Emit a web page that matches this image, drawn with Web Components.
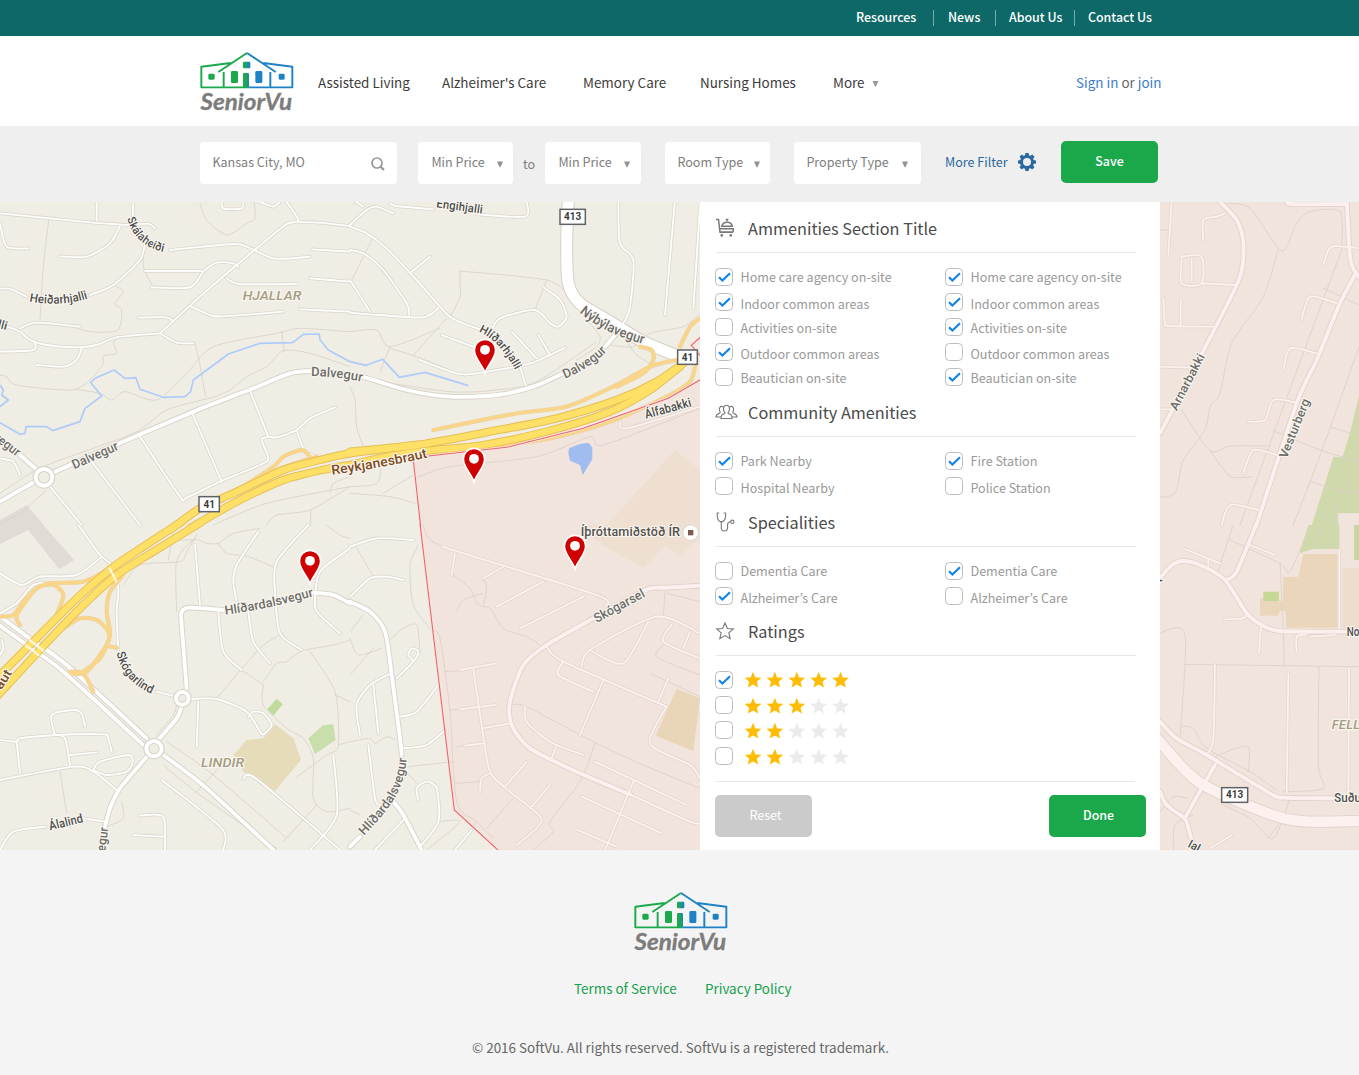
<!DOCTYPE html>
<html lang="en">
<head>
<meta charset="utf-8">
<title>SeniorVu</title>
<style>
html,body{margin:0;padding:0}
body{width:1359px;height:1075px;overflow:hidden;background:#fff;font-family:"Noto Sans CJK KR","Open Sans",sans-serif;font-size:13.45px;line-height:20px;color:#444}
</style>
</head>
<body>
<senior-app></senior-app>
<script>
const define=(name,html,init)=>{
  const t=document.createElement('template');t.innerHTML=html;
  customElements.define(name,class extends HTMLElement{
    connectedCallback(){
      if(this.shadowRoot)return;
      const r=this.attachShadow({mode:'open'});r.append(t.content.cloneNode(true));
      if(init)init(this,r);
    }
  });
};

/* ---------- brand ---------- */
define('brand-logo',`<style>:host{display:block;width:94px;height:60px;flex:none}svg{display:block;overflow:visible}text{line-height:1}</style>
<svg width="94" height="60" viewBox="0 0 94 60"><g transform="translate(-20 -11.3) scale(.33333)" fill="none" stroke-width="5.8" stroke-linejoin="round">
<g stroke="#1ba94c"><path d="M205 143H64V81L152 70M131 143V97M115 97L201 40"/></g>
<g stroke="#1d82c6"><path d="M201 40L287 97M250 70L337 81V143H205M271 97V143"/></g>
<g fill="#1ba94c"><rect x="85" y="102" width="19" height="18" rx="4"/><rect x="153" y="94" width="21" height="36" rx="4"/><path d="M201 66v20h-8q-4 0-4-4v-12q0-4 4-4zM189 104q0-4 4-4h9l5 5v38h-18z"/></g>
<g fill="#1d82c6"><rect x="296" y="102" width="18" height="18" rx="4"/><rect x="226" y="94" width="21" height="36" rx="4"/><path d="M201 66h7q3 0 3 4v12q0 4-3 4h-7zM200 100h6v43h-4v-36z"/></g>
</g><text x=".5" y="58.5" font-family="Lato" font-weight="700" font-style="italic" font-size="23.3" fill="#7c7c7c" stroke="#7c7c7c" stroke-width=".35" textLength="91.5" lengthAdjust="spacingAndGlyphs">SeniorVu</text></svg>`);

/* ---------- top strip ---------- */
define('top-bar',`<style>:host{display:flex;height:36px;background:#0e6867;padding-left:856px;align-items:center;color:#fff;font-weight:500;font-size:12.4px}
::slotted(*){white-space:nowrap}</style><slot></slot>`);
define('top-link',`<style>:host{display:flex;align-items:center;height:16px;line-height:16px;box-sizing:border-box;flex:none;margin-top:-1px}
:host([sep]){border-left:1px solid #7fa9a7;padding-left:13px}:host([sep=wide]){padding-left:14px}span{margin-top:-2px}</style><span><slot></slot></span>`,h=>h.style.width=h.getAttribute('w')+'px');

define('nav-bar',`<style>:host{display:flex;height:90px;background:#fff;align-items:center;padding-left:200px}
brand-logo{margin:0 24px 0 0}</style><brand-logo></brand-logo><slot></slot>`);
define('nav-item',`<style>:host{display:flex;align-items:center;flex:none;white-space:pre;color:#3c3c3c;margin-top:2px}
svg{margin:3px 0 0 7px}</style><slot></slot>`,(h,r)=>{h.style.width=h.getAttribute('w')+'px';
  if(h.hasAttribute('more'))r.innerHTML+='<svg width="7" height="6" viewBox="0 0 7 6"><path d="M.5 0H6.5L3.8 5.8H3.2z" fill="#999"/></svg>'});

/* ---------- filter bar ---------- */
define('filter-bar',`<style>:host{display:flex;height:76px;box-sizing:border-box;background:#efefef;padding:15px 0 0 200px;align-items:flex-start;font-size:12.55px}</style><slot></slot>`);
define('filter-field',`<style>:host{display:flex;box-sizing:border-box;height:42px;margin-top:1px;background:#fff;border-radius:4px;align-items:center;justify-content:space-between;color:#7d7d7d;flex:none;white-space:nowrap}
svg{flex:none;margin-top:2px}span{margin-top:-2px}</style><span><slot></slot></span>`,(h,r)=>{
  h.style.width=h.getAttribute('w')+'px';h.style.padding='0 '+(h.getAttribute('pr')||9)+'px 0 '+(h.getAttribute('pl')||13.4)+'px';
  r.innerHTML+=h.hasAttribute('search')
   ?'<svg width="14" height="14" viewBox="0 0 14 14" fill="none" stroke="#999"><circle cx="6" cy="6" r="5" stroke-width="1.7"/><path d="M9.6 9.6L13 13" stroke-width="2.2"/></svg>'
   :'<svg width="8" height="7" viewBox="0 0 8 7"><path d="M1 .5H7L4.4 6.3H3.600z" fill="#929292"/></svg>'});
define('gear-icon',`<style>:host{display:block;width:18px;height:18px}svg{display:block}</style><svg width="18" height="18" viewBox="-9 -9 18 18"></svg>`,(h,r)=>{
  let s='<circle r="5.5" fill="none" stroke="#2a689f" stroke-width="3"/>';
  for(let i=0;i<8;i++)s+=`<path d="M-2.1 -6L-1.6 -9H1.6L2.1 -6z" fill="#2a689f" transform="rotate(${i*45})"/>`;
  r.querySelector('svg').innerHTML=s});
define('more-filter',`<style>:host{display:flex;align-items:center;height:42px;width:91px;justify-content:space-between;color:#2b679c;white-space:nowrap;flex:none}</style><slot></slot><gear-icon></gear-icon>`);
define('app-button',`<style>:host{display:flex;width:97px;height:42px;border-radius:5px;background:#1ba84a;color:#fff;font-size:12.4px;font-weight:500;align-items:center;justify-content:center;flex:none}
:host([muted]){background:#cbcbcb;font-weight:400;font-size:12.53px}span{margin:-2px 0 0 0}:host([muted]) span{margin-left:4px}:host([nudge]) span{margin-left:2px}</style><span><slot></slot></span>`);

/* ---------- panel ---------- */
define('check-box',`<style>:host{display:block;width:18px;height:18px;flex:none}svg{display:block}path{display:none}:host([on]) path{display:block}</style>
<svg width="18" height="18" viewBox="0 0 18 18" fill="none"><rect x=".5" y=".5" width="17" height="17" rx="4" stroke="#bcbcbc"/><path d="M4 9.2L7.4 12.5L15 5.2" stroke="#1285e8" stroke-width="2.2"/></svg>`);
define('check-row',`<style>:host{display:flex;align-items:flex-start;height:18px;gap:7.5px;white-space:nowrap;font-size:12.58px;line-height:18px;color:#999}
span{display:block;margin-top:var(--drop,0px)}</style><check-box></check-box><span><slot></slot></span>`,(h,r)=>{
  if(h.hasAttribute('on'))r.querySelector('check-box').setAttribute('on','');
  h.style.setProperty('--drop',(h.getAttribute('drop')||0)+'px')});
define('check-grid',`<style>:host{display:grid;grid-template-columns:230px 230px;row-gap:7px}</style><slot></slot>`);
define('star-row',`<style>:host{display:flex;height:18px;align-items:center}check-box{margin-right:10.5px}svg{display:block;margin-top:var(--drop,0)}</style><check-box></check-box>`,(h,r)=>{
  if(h.hasAttribute('on'))r.querySelector('check-box').setAttribute('on','');
  let s='';for(let i=0;i<5;i++)s+=`<path transform="translate(${i*21.9+9} 9.4)" fill="${i<h.getAttribute('n')?'#ffbc05':'#ebebeb'}" d="M0 -8.6L2.3 -3L8.4 -2.6L3.8 1.3L5.2 7.2L0 4L-5.2 7.2L-3.8 1.3L-8.4 -2.6L-2.3 -3z"/>`;
  r.innerHTML+=`<svg width="110" height="18">${s}</svg>`;h.style.setProperty('--drop',(h.getAttribute('drop')||0)+'px')});
const ICONS={
 cart:'<path stroke-width="1.5" d="M1 1.5H3.5L5 14.3H18M4.6 10.8H18.2V14.3M5 14H17M6 8.3H18M7 8A5.2 4.8 0 0 1 17.2 8M12 3V1.5M10.8 1.5H13.4"/><circle cx="6.8" cy="17.4" r="1.3" fill="#777" stroke="none"/><circle cx="15.8" cy="17.4" r="1.3" fill="#777" stroke="none"/>',
 people:'<path d="M6 16.5C6 13 7 12.4 9.6 11.6C10.2 11.2 10 10.6 9.2 9.6C8 7.6 8 3.2 11.5 3.2S15 7.6 13.8 9.6C13 10.6 12.8 11.2 13.4 11.6C16 12.4 17 13 17 16.5zM8.2 4.7C5 3.6 3.8 6.2 4.6 8.6C4.9 9.5 5.4 10 5.1 10.7C4.6 11.3 1.200 11.6 .9 15H6M14.8 4.7C18 3.6 19.2 6.2 18.4 8.6C18.1 9.5 17.6 10 17.9 10.7C18.4 11.3 21.8 11.6 22.1 15H17"/>',
 steth:'<path d="M4.3 1H2.2C2 5.5 2.6 8.6 5 9.6H7.6C10 8.6 11 5.5 10.6 1H8.6M6.3 9.8V15.5C6.3 17.8 7.3 19 9.3 19S12.6 17.8 12.6 15.5V13C12.6 10.8 13.4 9.8 15.5 9.8"/><circle cx="17.3" cy="9.8" r="1.7"/>',
 star:'<path d="M10 2L12.4 7.5L18.3 8L13.8 11.9L15.2 17.7L10 14.6L4.8 17.7L6.2 11.9L1.7 8L7.6 7.5z"/>'};
define('panel-section',`<style>:host{display:block}header{display:flex;align-items:center;height:24px;margin-top:-1px;font-size:16.27px;line-height:24px;color:#4b4b4b;white-space:nowrap}
svg{display:block;width:23px;height:20px;margin-right:10px;overflow:visible}hr{border:0;height:1px;background:#e8e8e8;margin:12px 0 15px 1px;width:420px}</style>
<header><svg viewBox="0 0 23 20" fill="none" stroke="#777" stroke-width="1.1"></svg><span></span></header><hr><slot></slot>`,(h,r)=>{
  r.querySelector('svg').innerHTML=ICONS[h.getAttribute('icon')];r.querySelector('span').textContent=h.getAttribute('heading')});
define('filter-panel',`<style>:host{display:flex;flex-direction:column;box-sizing:border-box;width:460px;height:648px;background:#fff;padding:15px 14px 0 15px}</style><slot></slot>`);

/* ---------- map ---------- */
const TILES={A:[0,200],B:[350,200],C:[0,525],D:[350,525],E:[1150,200],F:[1150,525]};
const AREAS=[
['B','#f1e4dd','190 780 235 767 470 742 700 685 955 595 1060 535 1060 980 210 980'],
['D','#f1e4dd','209 -5 1060 -5 1060 980 447 980 313 855'],
['A','#e0dbd5','0 960 80 915 132 976 0 976'],['C','#e0dbd5','0 0 130 0 222 105 178 133 85 15 0 57'],
['B','#eedfd1','975 750 1050 810 1050 976 770 976'],['D','#eedfd1','690 0 1050 0 1050 40 990 90 945 62 880 128 740 50'],
['B','#a1bdf0','657 745 690 732 715 728 727 742 727 778 698 825 690 795 660 782 655 760'],
['C','#bfdb9c','802 553 830 522 848 538 820 572'],['C','#c9dfab','925 640 970 600 1000 598 1007 645 945 687'],
['C','#e7dcba','700 690 740 645 790 640 825 598 880 640 903 705 825 798 730 740'],
['D','#e9d6b8','980 492 1050 520 1030 678 917 632'],
['E','#d0d9ab','627 585 600 700 577 772 550 770 525 850 485 976 565 976 565 940 627 940'],
['F','#d0d9ab','475 0 568 0 568 72 490 72 448 85'],['F','#c8d79e','612 0 627 0 627 105 612 105'],
['F','#ead6ba','460 87 562 87 562 308 408 308 408 258 390 258 384 272 330 272 330 220 398 228 400 155 445 155'],
['F','#c5d896','340 200 387 200 387 228 340 228'],['F','#eedccd','578 130 627 130 627 310 578 310']];
/* tile | t thin path, m street, M main road, W wide road, H highway, R ramp (p prefix: pink district) | points */
const ROADS=`
A t 600 10 620 60 680 105 740 70 765 55 762 0
A t 147 55 130 200 120 360
A t 435 140 430 200 460 262
A t 340 255 370 275 345 310 365 330 360 380 340 395 270 395 200 375
A t 355 410 340 430 350 460 310 468 305 500 225 568 50 555 20 530 0 525
A t 225 568 300 580 335 600 375 575 470 600 560 520 640 440 840 398 900 385 1050 395
A t 585 430 597 480 617 590
A t 845 395 853 455
A t 640 592 690 570 740 530 800 500 850 452 930 460 1050 500
A t 0 880 130 800 400 700 500 630 640 592
A t 0 970 60 940 140 870
A t 640 975 800 910 1050 860
A t 800 975 830 945 930 930 1050 860
A t 990 880 1000 850 1050 830
A t 932 930 932 975
A m 0 40 70 47 150 55 270 67 385 75
A m 290 0 290 62
A m 400 0 398 60
A m 385 75 430 72 450 72 465 85
A m 360 78 330 130 260 170 180 169
A m 0 70 20 140 85 145
A m 435 130 420 180 340 255 270 285
A m 0 265 35 268 80 290
A m 510 150 610 140 720 133 820 175 930 170
A m 855 0 895 60 860 72 800 120 710 195 600 290 480 400
A m 895 66 960 68 1050 78
A m 435 213 605 213
A m 455 262 570 262 610 215 650 188 700 190 715 200
A m 680 235 720 252 890 252
A m 570 318 640 348 700 347 850 335
A m 900 328 1050 335
A m 935 148 1050 155
A m 930 235 1050 245
A m 415 353 500 352 520 365
A m 480 400 350 412 290 435 230 442 140 435 90 420 60 395 20 380
A m 60 385 110 368 240 380
A m 105 425 100 450 0 455
A m 245 445 230 480 190 500 110 495
A m 480 400 530 428 580 430
A m 665 0 670 25 725 25 730 0
A m 780 6 820 20 845 0
A m 420 710 540 890 560 893 660 845 780 795 805 775 785 720 805 710 830 712 890 690 930 655 1005 622
A m 577 640 665 845
A m 750 572 805 710
A m 890 690 915 755 960 770
A m 275 785 420 975
A m 150 860 245 975
A m 0 775 40 785 60 825
A M 0 905 130 832 300 755 580 635 760 565 870 520 940 513
A M 60 765 125 822
B t 300 350 330 290 330 220 350 215 590 240 650 280
B t 590 240 555 330
B t 70 110 0 250
B t 290 355 200 455 190 470
B t 0 395 80 390 120 440 270 385
B t 120 440 90 515
B t 120 445 200 470 300 510
B t 0 560 15 600 20 680 40 740
B t 0 860 80 850 95 790
B t 0 880 120 890 195 910
B pt 195 835 300 800 560 770 720 710 760 735 1050 625
B t 100 880 190 825
B t 720 370 750 410 740 440 680 480
B t 780 435 850 440 900 400 1000 380 1050 340
B t 830 425 860 465 900 490
B t 60 540 300 575 440 570 560 545 740 425
B m 0 150 40 160 100 210 170 310 178 345
B m 0 80 50 100 110 145 200 240 300 350 390 388
B m 0 75 50 30 80 20 130 40
B m 40 20 10 0
B m 240 170 185 215
B m 0 240 60 335
B m 0 338 90 345 220 352 265 325
B m 120 10 140 18 250 28
B m 380 43 525 50 530 6
B m 580 262 630 300 650 350 625 380 600 370 555 330 450 355 420 400
B m 275 405 370 440
B m 208 480 320 520 380 520 540 490 645 443
B m 485 395 560 475
B m 565 405 600 465
B m 510 500 527 555
B m 805 0 810 130 850 180 840 320 820 370 795 400
B m 975 0 945 345
B m 1050 20 1030 325
B M -130 513 -60 516 35 530 170 570 300 590 440 585 550 560 640 520
B M 765 440 800 400
B W 655 0 650 130 655 250 690 310 780 365 880 425 1000 475
B pm 810 665 830 685 1050 620
C t 530 260 530 110 580 45 620 55 655 55 700 25 780 10
C t 655 55 680 85 745 95 830 130
C t 580 45 520 50 505 105
C t 590 30 560 80 540 110 420 120 370 180
C t 850 325 780 370 650 520
C t 725 435 790 480
C t 790 480 790 540 860 610 910 640 940 700 940 820 980 860 1050 850
C t 790 470 830 415 860 410 905 378 1000 360 1050 345
C t 930 380 1005 500 1015 660 980 690 890 755
C t 1005 510 1050 530
C t 1015 660 1050 650
C t 950 840 850 950
C t 500 650 640 750 860 940
C t 490 720 600 810 830 970
C t 180 740 200 865
C t 665 720 590 800
C t 530 540 520 570 470 630
C t 365 830 370 880 320 905
C t 980 0 1020 30 1050 40
C m 235 0 300 90 335 120 355 190 350 260 355 380
C m 0 145 65 180 120 155 230 150 305 95
C m 0 265 50 235 100 180 150 173
C m 925 0 830 110 825 200 840 325 905 375
C m 775 20 710 120 700 170 710 230
C m 745 260 760 350 810 415
C m 655 260 670 380 725 435
C m 1050 70 960 140 945 230 955 265 1020 325
C m 585 60 600 240
C m 470 500 530 515
C m 570 522 650 522 740 560 780 620 790 628 815 600 790 565 760 560 745 575
C m 595 530 590 665
C m 165 630 155 570 220 555 245 565 255 605
C m 0 645 50 650 60 640 170 630 310 628 325 640 335 680
C m 50 650 60 745
C m 0 765 220 725 280 740 350 795
C m 165 630 195 640 210 720
C m 210 690 290 682
C m 280 735 300 710 385 690 398 710 380 740 320 750 280 735
C m 0 975 40 920 140 905
C m 250 880 315 890
C m 485 765 665 910 670 975
C m 420 872 490 875 495 975
C m 400 930 490 935
C m 730 760 770 762 1020 975
C m 1000 690 1010 870 930 975
C m 0 390 10 370 5 345
C M 0 274 75 330 200 420 440 640
C M 0 302 60 345 190 440 430 660
C M 490 690 620 790 820 975
C M 470 650 530 580 545 545
C M 560 490 545 300 545 260 570 248 670 255
C M 940 203 1000 210 1050 235
C M 445 690 360 790 330 850 315 905
D t 15 60 70 155
D t 205 60 180 120 190 240 240 310
D t 120 345 160 310 200 300 210 380
D t 0 320 40 270
D t 0 340 25 390 95 370
D t 0 450 70 370
D t 0 650 60 640 75 655 110 635 135 645
D t 175 725 310 710
D t 160 730 200 775
D t 270 890 330 890 230 975
D t 0 855 30 870
D m 0 65 80 40 190 45
D m 0 215 60 160 110 155 160 165
D m 30 630 20 540 60 480 120 447
D m 70 480 85 625
D m 140 460 190 410 205 380 185 370 175 390 190 408
D m 150 575 200 560 265 480
D m 160 670 230 660 285 615
D m 55 660 75 820 90 840
D m 205 825 200 790 230 770 260 790 265 890 210 965
D m 75 975 160 885
D m 365 915 315 975
D M 0 230 60 260 105 320 125 450 150 640 155 690
D M 130 830 160 870 215 975
D M 0 965 30 935
D pt 245 320 270 340 300 560 320 830 380 890 430 940
D pt 220 0 235 40 275 65
D pt 310 150 360 190 385 240 420 250 460 310 530 335 570 360
D pt 400 160 410 190 400 240
D pt 320 260 340 225 400 205
D pt 945 200 940 270
D pt 485 540 530 545 730 650 880 720 1050 790
D pt 735 655 690 770 600 890 610 920 550 975
D pt 900 445 1050 515
D pt 945 355 920 395 1050 450
D pt 950 205 1050 230
D pt 285 440 330 437
D pt 300 555 330 553
D pt 318 665 350 660
D pt 315 775 385 770
D pt 490 820 410 910
D pt 380 890 350 930
D pm 275 65 740 210 765 245
D pm 315 85 305 150
D pm 460 125 400 160
D pm 580 170 440 245
D pm 700 215 510 310
D pm 330 435 440 415
D pm 370 432 395 600 420 740 480 800 575 885 500 960
D pm 330 553 435 540
D pm 395 610 480 595
D pm 345 662 405 655
D pm 390 800 395 760 420 745
D pm 530 710 465 785
D pm 600 780 540 850
D pm 590 365 640 410 950 545
D pm 640 410 625 450 730 500
D pm 695 425 720 375 920 275 1050 325
D pm 895 290 820 415 725 378
D pm 760 465 690 630
D pm 955 460 925 530
D pm 950 545 900 655 1020 720 1050 760
D pm 965 300 940 350 1050 400
D pm 1020 320 1000 370
D pm 525 545 530 590 600 650 700 690
D pm 620 660 605 700
D pm 735 710 1010 840
D pm 850 770 765 975
D pm 840 808 1020 890 1050 895
D pm 695 815 935 925
D pm 675 912 800 965
D pM 1050 182 950 188 900 190 850 215 730 280 590 360 520 420 480 530 485 600 540 670 690 745 840 808
E pt 235 10 300 25 385 145 410 140 440 70 480 35 570 35 575 150
E pt 385 145 340 290 245 430 210 580 180 620 165 690 100 780 80 870 55 890 30 890
E pt 95 630 180 752 240 738 350 738
E pt 180 752 240 828 305 830
E pt 575 150 430 540 270 975
E pt 627 440 520 740 430 975
E pt 365 690 510 750 627 785
E pt 480 843 560 870 627 880
E pt 540 680 600 700
E pt 520 265 627 315
E pt 627 790 570 880 560 975
E pt 30 90 60 90
E pm 65 0 55 165
E pm 160 120 160 60 200 50 225 40
E pm 95 170 155 170 155 250 95 250 95 170
E pm 125 175 125 245
E pm 155 250 255 255
E pm 40 295 45 370 60 378 190 380
E pm 92 300 92 375
E pm 30 500 120 503
E pm 30 628 60 628
E pm 520 195 545 140 627 145
E pm 455 360 480 290 560 310
E pm 400 510 420 445 500 460
E pm 295 665 345 660 370 600 440 608
E pm 280 820 310 750 380 765
E pm 215 975 240 915 325 930
E pM 410 0 425 12 585 12
E pM 205 0 260 60 280 130 270 230 195 385 30 700
E pM 590 0 600 170 615 215 640 245
E pM 615 225 570 310 500 480 440 610 318 980
F pt 250 0 205 135
F pt 240 45 390 115 420 140 480 0
F pt 390 115 400 320 402 420
F pt 30 323 105 328 90 640
F pt 105 418 627 425
F pt 507 425 505 720 520 790 400 800
F pt 95 605 130 610 170 670 300 740 380 795
F pt 190 700 230 680 295 665 295 740
F pt 220 840 300 880 370 940 420 820
F pt 70 975 75 900 130 870
F pt 355 940 385 900
F pt 30 860 70 815 110 820
F pt 520 0 490 60
F pm 105 72 210 115
F pm 175 105 175 130
F pm 300 60 375 90
F pm 225 283 280 280 290 268
F pm 333 300 327 385
F pm 440 378 440 335 470 328
F pm 480 335 555 330
F pm 195 420 190 640 170 690
F pm 415 445 410 805
F pm 597 430 595 815
F pm 180 970 245 930
F pm 568 75 568 310
F pM 30 160 60 125 95 108 150 120 225 165 290 265 335 300 390 318 590 320
F pM 320 -5 260 140 230 165
F pM 195 720 110 870 110 890 130 960
F pM 30 800 50 840 105 880
F pW 20 640 100 730 160 780 290 840 400 880 480 890 630 888
F pM 30 590 80 640 170 690 360 805 400 818 550 820
A R 700 880 820 800 850 770 905 750 930 770
A R 660 895 830 810 950 770
B R 250 690 500 640 650 620 800 555 900 500 980 480
B R 870 440 905 450 910 480 880 520 800 560
B R 990 440 1020 380 1050 355
B R 1035 500 1020 545 950 590 780 665 600 715 400 745
C R 0 275 40 270 70 230 110 190 150 175 250 170 330 130 430 60
C R 60 300 50 270 110 190 160 180 190 210 170 270
C R 190 310 240 280 290 285 325 320 320 360 260 440 215 445
C R 370 150 330 200 320 260 330 330 300 400 250 440
C R 330 365 350 368
C R 210 440 250 445 280 500
A H 510 990 600 925 700 880 850 810 960 780 1050 760 1250 735
A H 570 985 700 910 850 840 990 805 1050 795
B H 0 755 200 735 420 695 620 655 800 600 920 545 1000 490
B H 0 795 110 770 235 752 400 735 600 692 780 635 900 570 990 500
C H -20 470 90 360 220 230 335 130 430 65 545 -10
C H -10 515 110 385 240 250 350 150 460 80 600 -6`.trim().split('\n').map(l=>{const p=l.split(' ');return[p[0],p[1],p.slice(2).map(Number)]});
const WATER=[['A','0 555 10 570 5 585 25 600 0 620'],['A','0 668 60 703 75 700 78 680 140 680 158 692 240 665 255 625 305 588 272 548 285 535 342 510 375 535 408 533 420 568 490 592 555 590 572 575 580 540 685 462 780 430 878 428 910 403 958 402 960 420 985 450 1050 485'],['B','0 485 48 496 98 478 148 532 225 517 355 557']];
/* tile, baseline path, length, size, colour, text, extra attributes */
const DARK='#4d4d4a',GREY='#6d6c66',SAND='#a59d80';
const LABELS=[
['A','M382 55C394 107 438 150 505 158',156,34,DARK,'Skálaheiði'],
['A','M88 304Q180 322 268 294',178,36,DARK,'Heiðarhjalli'],
['A','M728 300H910',176,38,SAND,'HJALLAR','font-style="italic"'],
['A','M223 808L367 744',148,39,GREY,'Dalvegur'],['A','M933 528Q1010 529 1092 546',154,39,GREY,'Dalvegur'],
['A','M-22 716L62 780',90,38,GREY,'vegur'],['A','M-8 383L22 391',27,36,DARK,'lli'],
['A','M996 824Q1140 805 1288 771',292,40,'#7d4a1c','Reykjanesbraut'],
['B','M258 22L402 42',140,36,DARK,'Engihjalli'],['B','M688 337Q763 403 888 434',216,41,GREY,'Nýbýlavegur'],
['B','M645 536Q725 503 776 448',152,39,GREY,'Dalvegur'],['B','M386 395Q450 422 500 518',162,34,DARK,'Hlíðarhjalli'],
['B','M888 656L1032 617',143,38,DARK,'Álfabakki'],
['D','M692 34H1000',298,38,'#55504c','Íþróttamiðstöð ÍR'],
['C','M676 269Q800 253 942 213',272,38,GREY,'Hlíðardalsvegur'],['D','M42 932C110 860 167 800 170 688',272,38,GREY,'Hlíðardalsvegur'],
['C','M350 383C363 440 400 488 466 510',168,36,DARK,'Skógarlind'],['C','M603 725H740',130,38,SAND,'LINDIR','font-style="italic"'],
['C','M150 916L256 890',104,37,DARK,'Álalind'],['C','M316 980L325 905',72,38,GREY,'egur'],['C','M4 496L42 436',62,38,'#7d4a1c','aut'],
['D','M740 294L894 210',168,39,GREY,'Skógarsel'],
['E','M80 634L168 464',186,37,GREY,'Arnarbakki'],['E','M410 777L482 598',188,37,GREY,'Vesturberg'],
['F','M590 332H660',38,37,DARK,'No'],['F','M553 832H660',80,38,DARK,'Suðu'],['F','M545 612H660',86,37,SAND,'FELL','font-style="italic"'],
['F','M112 965L150 985',36,34,DARK,'lal'],['F','M20 178L36 184',13,32,DARK,'r']];
const SHIELDS=[['A',597,890,61,45,'41'],['B',630,28,76,45,'413'],['B',983,450,59,43,'41'],['F',215,788,78,44,'413']];
const smooth=p=>{const n=p.length/2,g=i=>{i=Math.max(0,Math.min(n-1,i));return[p[2*i],p[2*i+1]]};let d=`M${g(0)}`;
  for(let i=0;i<n-1;i++){const a=g(i-1),b=g(i),c=g(i+1),e=g(i+2),k=.13;d+=`C${b[0]+(c[0]-a[0])*k} ${b[1]+(c[1]-a[1])*k} ${c[0]-(e[0]-b[0])*k} ${c[1]-(e[1]-b[1])*k} ${c[0]} ${c[1]}`}return d};
const STYLE={m:['#dcd8cd',10.5,'#fdfdfb',5.6],M:['#d7d3c8',17,'#fff',11.5],W:['#d5d1c7',39,'#fff',33],R:['#ecd5a4',13,'#fbd587',8.5],H:['#e6bf55',25,'#fee067',19],
 pm:['#e5d7d0',10.5,'#fbf1ed',5.4],pM:['#e1d2cc',17,'#fcf0ee',11.5],pW:['#dfd0cb',36,'#fdf1f0',31]};
const put=(t,s)=>`<g transform="translate(${TILES[t]}) scale(.333333)">${s}</g>`;
define('street-map',`<style>:host{display:block;width:1359px;height:648px}svg{display:block}text{font-family:Roboto,sans-serif}</style>
<svg width="1359" height="648" viewBox="0 202 1359 648"></svg>`,(h,r)=>{
  let s='<rect y="202" width="1359" height="648" fill="#f0ede5"/><rect x="1150" y="202" width="209" height="648" fill="#f1e4dd"/>';
  for(const[t,c,p]of AREAS)s+=put(t,`<polygon points="${p}" fill="${c}"/>`);
  const line=(t,p,c,w)=>put(t,`<path d="${smooth(p)}" fill="none" stroke="${c}" stroke-width="${w}" stroke-linecap="round" stroke-linejoin="round"/>`);
  for(const[t,k,p]of ROADS)if(k.endsWith('t'))s+=line(t,p,k[0]=='p'?'#dfd1ca':'#d9d5ca',2.8);
  for(const[t,p]of WATER)s+=put(t,`<polyline points="${p}" fill="none" stroke="#aecbfa" stroke-width="5" stroke-linejoin="round"/>`);
  for(const set of['m M W pm pM pW','R','H'].map(x=>x.split(' '))){
    for(const[t,k,p]of ROADS)if(set.includes(k))s+=line(t,p,STYLE[k][0],STYLE[k][1]);
    for(const[t,k,p]of ROADS)if(set.includes(k))s+=line(t,p,STYLE[k][2],STYLE[k][3]);
  }
  for(const[t,x,y,q]of[['A',132,832,25],['C',547,520,19],['C',462,671,23]])
    s+=put(t,`<circle cx="${x}" cy="${y}" r="${q}" fill="#f0ede5" stroke="#d5d1c6" stroke-width="18"/><circle cx="${x}" cy="${y}" r="${q}" fill="none" stroke="#fff" stroke-width="12"/>`);
  s+=put('C','<path d="M88 345L132 378M76 360L118 392M328 128L350 172" stroke="#fff" stroke-width="7" opacity=".75"/>');
  for(const[c,w]of[['#fbe3df',8],['#e8666b',3.2]])s+=
    put('B',`<path d="M212 980L190 780M235 768L470 742L700 685L955 595L1055 537M1055 408L1024 436L1055 472" fill="none" stroke="${c}" stroke-width="${w}"/>`)+
    put('D',`<path d="M210 -4L313 855L447 978" fill="none" stroke="${c}" stroke-width="${w}"/>`);
  s+=put('D','<circle cx="1022" cy="23" r="23" fill="#fff" stroke="#d8cfc9" stroke-width="2"/><rect x="1014" y="15" width="16" height="16" fill="#7d5a50"/>');
  LABELS.forEach(([t,d,len,sz,c,txt,x],i)=>{s+=put(t,`<path id="b${i}" d="${d}" fill="none"/><text font-size="${sz}" font-weight="500" ${x||''} fill="${c}" stroke="#f8f5f0" stroke-width="7" stroke-linejoin="round" paint-order="stroke"><textPath href="#b${i}" textLength="${len}" lengthAdjust="spacingAndGlyphs">${txt}</textPath></text>`)});
  for(const[t,x,y,w,hh,n]of SHIELDS)s+=put(t,`<rect x="${x}" y="${y}" width="${w}" height="${hh}" fill="#fff" stroke="#5f6266" stroke-width="4.5"/><text x="${x+w/2}" y="${y+hh/2+10.5}" font-size="30" font-weight="700" text-anchor="middle" fill="#3c3c3c">${n}</text>`);
  r.querySelector('svg').innerHTML=s;
});
define('map-pin',`<style>:host{position:absolute;width:26px;height:38px;margin:-36px 0 0 -13px}svg{display:block}</style>
<svg width="26" height="38" viewBox="-13 -36 26 38"><path d="M0 0C-2 -7.5 -10.6 -14.5 -10.6 -23A10.6 10.6 0 0 1 10.6 -23C10.6 -14.5 2 -7.5 0 0z" fill="#cf0000" stroke="#fff" stroke-width="1.6"/><circle cy="-23.2" r="4.9" fill="#fff"/></svg>`,h=>{
  h.style.left=h.getAttribute('x')+'px';h.style.top=h.getAttribute('y')+'px'});
define('map-stage',`<style>:host{display:grid;position:relative;height:648px;overflow:hidden}street-map,.over{grid-area:1/1}.over{margin-left:700px;z-index:1;width:460px}</style>
<street-map></street-map><slot name="pin"></slot><div class="over"><slot></slot></div>`);

/* ---------- footer ---------- */
define('page-footer',`<style>:host{display:flex;flex-direction:column;height:225px;box-sizing:border-box;background:#f4f4f4;padding-top:41px}
brand-logo{margin-left:634px}nav{display:flex;color:#13a04b;margin:27px 0 0 574px}nav span{width:131px;white-space:nowrap}p{margin:39px 0 0 472px;color:#666;white-space:nowrap}</style>
<brand-logo></brand-logo><nav><span>Terms of Service</span><span>Privacy Policy</span></nav><p>© 2016 SoftVu. All rights reserved. SoftVu is a registered trademark.</p>`);

define('senior-app',`<style>:host{display:block;width:1359px}.s3{margin-right:21px}.a{color:#3e7cc9}.sign{color:#666}
.g15{margin-top:15px}.g16{margin-top:16px}.foot{display:flex;justify-content:space-between;border-top:1px solid #e8e8e8;margin:16px 11px 0 1px;padding-top:13px}.foot app-button:first-child{margin-left:-1px}.foot app-button:last-child{margin-right:-11px}
.rates{display:flex;flex-direction:column;gap:7px}.rates star-row:last-child{margin-top:1px}</style>
<top-bar><top-link w="77">Resources</top-link><top-link sep="wide" w="62">News</top-link><top-link sep w="79">About Us</top-link><top-link sep w="90">Contact Us</top-link></top-bar>
<nav-bar><nav-item w="124">Assisted Living</nav-item><nav-item w="141">Alzheimer's Care</nav-item><nav-item w="117">Memory Care</nav-item><nav-item w="133">Nursing Homes</nav-item><nav-item w="243" more>More</nav-item><nav-item w="90"><span class="a">Sign in</span><span class="sign"> or </span><span class="a">join</span></nav-item></nav-bar>
<filter-bar>
<filter-field w="197" pl="12.4" pr="12.5" search class="s3">Kansas City, MO</filter-field>
<filter-field w="95">Min Price</filter-field><span style="width:12px;margin:13px 10px 0;color:#7d7d7d">to</span>
<filter-field w="96" pr="10" style="margin-right:24px">Min Price</filter-field>
<filter-field w="105" pl="12.4" style="margin-right:24px">Room Type</filter-field>
<filter-field w="127" pl="12.4" pr="12" style="margin-right:24px">Property Type</filter-field>
<more-filter style="margin-right:25px">More Filter</more-filter><app-button>Save</app-button>
</filter-bar>
<map-stage>
<map-pin slot="pin" x="484.700" y="171"></map-pin><map-pin slot="pin" x="473.700" y="279.500"></map-pin><map-pin slot="pin" x="309.800" y="381.500"></map-pin><map-pin slot="pin" x="574.700" y="366.800"></map-pin>
<filter-panel>
<panel-section icon="cart" heading="Ammenities Section Title"><check-grid>
<check-row on>Home care agency on-site</check-row><check-row on>Home care agency on-site</check-row>
<check-row on drop="2">Indoor common areas</check-row><check-row on drop="2">Indoor common areas</check-row>
<check-row drop="1">Activities on-site</check-row><check-row on drop="1">Activities on-site</check-row>
<check-row on drop="2">Outdoor common areas</check-row><check-row drop="2">Outdoor common areas</check-row>
<check-row drop="1">Beautician on-site</check-row><check-row on drop="1">Beautician on-site</check-row></check-grid></panel-section>
<panel-section class="g15" icon="people" heading="Community Amenities"><check-grid>
<check-row on>Park Nearby</check-row><check-row on>Fire Station</check-row>
<check-row drop="2">Hospital Nearby</check-row><check-row drop="2">Police Station</check-row></check-grid></panel-section>
<panel-section class="g16" icon="steth" heading="Specialities"><check-grid>
<check-row>Dementia Care</check-row><check-row on>Dementia Care</check-row>
<check-row on drop="2">Alzheimer’s Care</check-row><check-row drop="2">Alzheimer’s Care</check-row></check-grid></panel-section>
<panel-section class="g15" icon="star" heading="Ratings"><div class="rates"><star-row on n="5"></star-row><star-row n="3" drop="1"></star-row><star-row n="2" drop="1"></star-row><star-row n="2" drop="1"></star-row></div></panel-section>
<div class="foot"><app-button muted>Reset</app-button><app-button nudge>Done</app-button></div>
</filter-panel>
</map-stage>
<page-footer></page-footer>`);
</script>
</body>
</html>
